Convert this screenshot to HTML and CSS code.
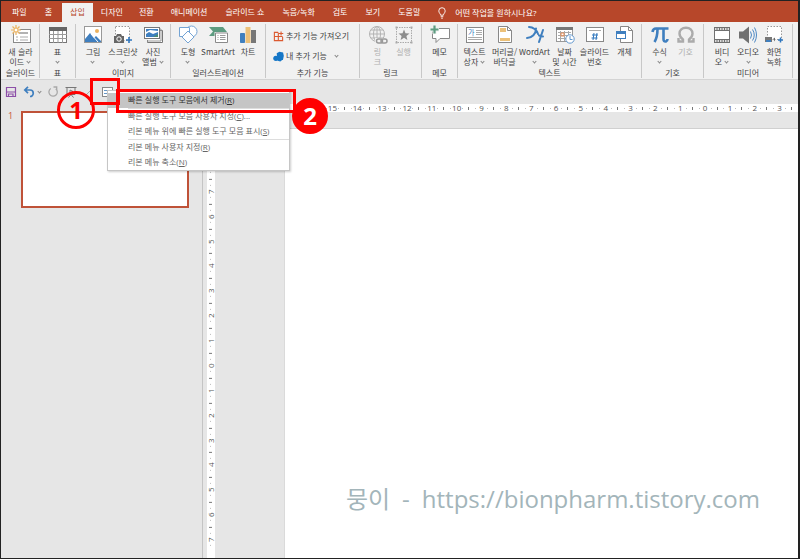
FILE: index.html
```html
<!DOCTYPE html>
<html lang="ko">
<head>
<meta charset="utf-8">
<title>프레젠테이션</title>
<link rel="stylesheet" href="styles.css">
</head>
<body>
<div class="app">
  <nav class="tabs">
    <a class="tab" href="#">파일</a>
    <a class="tab home" href="#">홈</a>
    <a class="tab active" href="#">삽입</a>
    <a class="tab" href="#">디자인</a>
    <a class="tab" href="#">전환</a>
    <a class="tab wide" href="#">애니메이션</a>
    <a class="tab wide" href="#">슬라이드 쇼</a>
    <a class="tab wide" href="#">녹음/녹화</a>
    <a class="tab wide" href="#">검토</a>
    <a class="tab wide" href="#">보기</a>
    <a class="tab wide" href="#">도움말</a>
    <a class="tell" href="#"><svg width="8" height="12" viewBox="0 0 8 12" fill="none" stroke="#fff" stroke-width=".9"><path d="M2.6 8.2C2.6 6.6.8 6 .8 3.9a3.2 3.2 0 0 1 6.4 0C7.200 6 5.400 6.600 5.400 8.200zM2.700 9.700h2.600M3.200 11.200h1.600"/></svg>어떤 작업을 원하시나요?</a>
  </nav>

  <div class="ribbon">
    <section class="group">
      <div class="tools">
        <button class="tool"><svg viewBox="0 0 20 20" fill="none"><rect x="2.500" y="4.500" width="17" height="13" fill="#fff" stroke="#8a8a8a"/><path d="M8 8h9" stroke="#999" stroke-width="1.500"/><path d="M5 12h2m2 0h8M5 15h2m2 0h8" stroke="#aaa"/><circle cx="5" cy="5" r="3.800" fill="#f1f1f1"/><path d="M5 0v10M0 5h10M1.500 1.500l7 7M8.500 1.500l-7 7" stroke="#ecb35f" stroke-width="1.200"/><circle cx="5" cy="5" r="2" fill="#fff" stroke="#ecb35f"/></svg><span>새 슬라<br>이드 <i class="caret"></i></span></button>
      </div>
      <h2>슬라이드</h2>
    </section>
    <section class="group">
      <div class="tools">
        <button class="tool"><svg viewBox="0 0 20 20" fill="none"><rect x="1.500" y="2.500" width="17" height="15" fill="#fff" stroke="#777"/><path d="M1 2h18v4H1z" fill="#666"/><path d="M1 9.500h18M1 13.500h18M5.500 6v12M10 6v12M14.500 6v12" stroke="#999"/></svg><span>표<br><i class="caret"></i></span></button>
      </div>
      <h2>표</h2>
    </section>
    <section class="group">
      <div class="tools">
        <button class="tool"><svg viewBox="0 0 20 20"><rect x="1.500" y="1.500" width="17" height="16" fill="#fff" stroke="#999"/><path d="M2 17v-3l5-6 4 5 2-2 5 5v1z" fill="#3f7fbf"/><path d="M8 9l7 8" stroke="#fff"/><circle cx="14" cy="6" r="2" fill="#ecb35f"/></svg><span>그림<br><i class="caret"></i></span></button>
        <button class="tool"><svg viewBox="0 0 20 20" fill="none"><rect x="2.500" y="1.500" width="14" height="14" fill="#fff" stroke="#999" stroke-dasharray="1.500 1.500"/><path d="M1 11h2l1-2h4l1 2h2v7H1z" fill="#666"/><circle cx="6" cy="14" r="2.200" stroke="#fff"/><path d="M16 12v6m-3-3h6" stroke="#2f76bd" stroke-width="1.600"/></svg><span>스크린샷<br><i class="caret"></i></span></button>
        <button class="tool"><svg viewBox="0 0 20 20" fill="none"><path d="M16 5.500h3.500v12h-15V15" fill="#fff" stroke="#777"/><path d="M17 4h1v12H4" stroke="#999"/><rect x="1.500" y="2.500" width="15" height="11" fill="#fff" stroke="#777"/><path d="M3 12v-3l3-2 4 2 5-2v5z" fill="#3f7fbf"/><path d="M3 4h12v2L7 5 3 7z" fill="#3f7fbf"/><path d="M10 12l5-3v3z" fill="#4c8c72"/></svg><span>사진<br>앨범 <i class="caret"></i></span></button>
      </div>
      <h2>이미지</h2>
    </section>
    <section class="group">
      <div class="tools">
        <button class="tool"><svg viewBox="0 0 20 20" fill="#fff" stroke="#74a4d4"><circle cx="13.500" cy="6.500" r="5.500"/><path d="M1.500 2.500h10v9h-10z"/><path d="M10 6l6 6-6 6-6-6z"/></svg><span>도형<br><i class="caret"></i></span></button>
        <button class="tool"><svg viewBox="0 0 20 20" fill="none"><path d="M1 2h14l4 5-4 4H1l4-4.500z" fill="#5d9b80"/><path d="M6.500 7H20v11.500H6.500z" fill="#f1f1f1"/><path d="M7.500 8h12v9.500h-12z" fill="#fff" stroke="#8a8a8a"/><path d="M9.500 10.500h1m1.500 0h5.500M9.500 12.500h1m1.500 0h5.500M9.500 14.500h1m1.500 0h5.500" stroke="#999"/></svg><span>SmartArt</span></button>
        <button class="tool"><svg viewBox="0 0 20 20"><path d="M2.500 8.500h4v9h-4z" fill="#3f7fbf" stroke="#3f7fbf"/><path d="M7.500 2h5v16h-5z" fill="#ecc078"/><path d="M13 5h5v13h-5z" fill="#777"/></svg><span>차트</span></button>
      </div>
      <h2>일러스트레이션</h2>
    </section>
    <section class="group">
      <div class="rows">
        <button class="row"><svg viewBox="0 0 12 12" fill="none" stroke="#dc5a30" stroke-width="1.200"><path d="M5.500 1.500h-4v9h9V6.500M1.500 6h9M5.800 1.500v9M8.800.5v4.500M6.500 2.800h4.700"/></svg>추가 기능 가져오기</button>
        <button class="row"><svg viewBox="0 0 12 12" fill="#1677c7"><path d="M4 2.500L7 .8l4 .7.8 4L11 9l-3 2.500-3-1z"/><circle cx="3.200" cy="8" r="2.900"/></svg>내 추가 기능 <i class="caret far"></i></button>
      </div>
      <h2>추가 기능</h2>
    </section>
    <section class="group narrow">
      <div class="tools">
        <button class="tool" disabled><svg viewBox="0 0 20 20" fill="none" stroke="#b3b3b3"><circle cx="9" cy="9" r="7.500"/><ellipse cx="9" cy="9" rx="3.500" ry="7.500"/><path d="M9 1.500v15M1.500 9h15M3 5h12M3 13h12"/><path d="M7 13h13v6H7z" fill="#f1f1f1" stroke="none"/><rect x="8.500" y="14" width="6" height="4" rx="2" stroke="#999" stroke-width="1.500"/><rect x="13" y="14" width="6" height="4" rx="2" stroke="#999" stroke-width="1.500"/></svg><span>링<br>크</span></button>
        <button class="tool" disabled><svg viewBox="0 0 20 20"><rect x="2.500" y="2.500" width="15" height="15" fill="none" stroke="#aaa" stroke-dasharray="1.500 1"/><path d="M10 4.500l1.500 3.800 4 .2-3.100 2.500 1 3.900L10 12.700l-3.400 2.200 1-3.900L4.500 8.500l4-.2z" fill="#8d8d8d"/><path d="M1.500 1.500h2v2h-2zM16.500 1.500h2v2h-2zM1.500 16.500h2v2h-2zM16.500 16.500h2v2h-2z" fill="#aaa"/></svg><span>실행</span></button>
      </div>
      <h2>링크</h2>
    </section>
    <section class="group">
      <div class="tools">
        <button class="tool"><svg viewBox="0 0 20 20" fill="none"><path d="M2.500 3.500h17v10H10l-4 4v-4H2.500z" fill="#fff" stroke="#888"/><path d="M4.500 0v9M0 4.500h9" stroke="#f1f1f1" stroke-width="4"/><path d="M4.500.5v8M.5 4.500h8" stroke="#5d9b80" stroke-width="2.200"/></svg><span>메모</span></button>
      </div>
      <h2>메모</h2>
    </section>
    <section class="group">
      <div class="tools">
        <button class="tool"><svg viewBox="0 0 20 20"><rect x="1.500" y="2.500" width="17" height="15" fill="#fff" stroke="#888"/><text x="3" y="10" font-size="7" fill="#2f76bd">가</text><path d="M11 5.500h6M11 7.500h6M11 9.500h6M3 12.500h14M3 14.500h14" stroke="#aaa"/></svg><span>텍스트<br>상자 <i class="caret"></i></span></button>
        <button class="tool"><svg viewBox="0 0 20 20"><path d="M3.500 1.500h9l4 4v12h-13z" fill="#fff" stroke="#888"/><path d="M12.500 1.500v4h4" fill="none" stroke="#888"/><path d="M5 3h6v4H5zM5 13h10v3H5z" fill="#ecc078"/></svg><span>머리글/<br>바닥글</span></button>
        <button class="tool"><svg viewBox="0 0 20 20" fill="none" stroke="#3f7fbf" stroke-width="2" stroke-linecap="round"><path d="M4 2c4 0 8 3 9 7M11 3.500C11 9 7 13 2 13M18 5l-4 12M14 10.500l4 1"/></svg><span>WordArt<br><i class="caret"></i></span></button>
        <button class="tool"><svg viewBox="0 0 20 20" fill="none"><rect x="1.500" y="2.500" width="16" height="14" fill="#fff" stroke="#999"/><path d="M1 2h17v3H1z" fill="#777"/><path d="M3 7.500h13M3 10.500h13M3 13.500h13M5.500 6v10M9.500 6v10M13.500 6v10" stroke="#aaa"/><path d="M6 8h3v3H6z" stroke="#e68b55"/><circle cx="15" cy="14" r="4.200" fill="#fff" stroke="#6499cf"/><path d="M15 11v3.500h2.500" stroke="#6499cf"/></svg><span>날짜<br>및 시간</span></button>
        <button class="tool"><svg viewBox="0 0 20 20" fill="none"><rect x="1.500" y="2.500" width="17" height="14" fill="#fff" stroke="#888"/><path d="M4 5.500h12" stroke="#aaa"/><path d="M9 8l-1 7m4-7l-1 7M7 10h6m-6.500 3h6" stroke="#2f76bd"/></svg><span>슬라이드<br>번호</span></button>
        <button class="tool"><svg viewBox="0 0 20 20" fill="#fff" stroke="#888"><path d="M5.500 1.500h8l4 4v12h-12z"/><path d="M13.500 1.500v4h4" fill="none"/><rect x="1.500" y="6.500" width="9" height="7" stroke="#3f7fbf"/><path d="M1 6h10v3H1z" fill="#3f7fbf" stroke="none"/></svg><span>개체</span></button>
      </div>
      <h2>텍스트</h2>
    </section>
    <section class="group narrow">
      <div class="tools">
        <button class="tool"><svg viewBox="0 0 20 20" fill="none" stroke="#3f7fbf"><path d="M2.500 7Q3 3.500 6 3.500h12.500" stroke-width="2.600"/><path d="M7.500 4q0 8-3 13" stroke-width="2.600"/><path d="M13.500 4v10q0 3 2.500 2.500 1.500-.5 1.500-2.500" stroke-width="2.600"/></svg><span>수식<br><i class="caret"></i></span></button>
        <button class="tool" disabled><svg viewBox="0 0 20 20" fill="none" stroke="#ababab" stroke-width="2.400"><path d="M2.500 13v3.500H7v-2Q3.500 12 3.500 8.500C3.500 5 6 2.700 10 2.700s6.500 2.300 6.500 5.800q0 3.500-3.500 6v2h4.500V13"/></svg><span>기호</span></button>
      </div>
      <h2>기호</h2>
    </section>
    <section class="group narrow">
      <div class="tools">
        <button class="tool"><svg viewBox="0 0 20 20"><rect x="2" y="2" width="16" height="16" fill="#707070"/><path d="M3 6h14v8H3z" fill="#fff"/><path d="M3 4h15M3 16h15" stroke="#fff" stroke-width="1.600" stroke-dasharray="1.500 1"/></svg><span>비디<br>오 <i class="caret"></i></span></button>
        <button class="tool"><svg viewBox="0 0 20 20" fill="none"><path d="M1 6.500h4l6-5v17l-6-5H1z" fill="#707070"/><path d="M12.500 6.500q2 3.500 0 7M14.500 4.500q3.500 5.500 0 11M16.500 2.500q4 7.500 0 15" stroke="#4d88c4"/></svg><span>오디오<br><i class="caret"></i></span></button>
        <button class="tool"><svg viewBox="0 0 20 20" fill="none"><rect x="3.500" y="1.500" width="14" height="13" fill="#fff" stroke="#999" stroke-dasharray="1.500 1.500"/><path d="M1 12h7v5H1z" fill="#777"/><path d="M2 15h5v2H2z" fill="#3f7fbf"/><path d="M9 14l2-1.500v4z" fill="#666"/><path d="M16.500 12.500v5M14 15h5" stroke="#2f76bd" stroke-width="1.500"/></svg><span>화면<br>녹화</span></button>
      </div>
      <h2>미디어</h2>
    </section>
  </div>

  <div class="quick">
    <button class="q" aria-label="저장"><svg viewBox="0 0 12 12" fill="none" stroke="#8d4fa8" stroke-width="1.200"><path d="M1.500 1.500h9v9h-9zM1.500 6h9M3.500 10.500V8h4.500v2.500"/></svg></button>
    <button class="q" aria-label="실행 취소"><svg viewBox="0 0 12 12" fill="none" stroke="#3f7fbf" stroke-width="1.700"><path d="M1.500 4h5.500a3.200 3.200 0 0 1 0 6.500M5 .8L1.800 4 5 7.200"/></svg></button>
    <i class="caret"></i>
    <button class="q" aria-label="다시 실행"><svg viewBox="0 0 12 12" fill="none" stroke="#a8a8a8" stroke-width="1.300"><path d="M3.800 2.500a4.200 4.200 0 1 0 5 .3M6.500 1h3.200v3.300"/></svg></button>
    <button class="q" aria-label="슬라이드 쇼"><svg viewBox="0 0 12 12" fill="none" stroke="#777"><path d="M.5 1.500h11M2 2v6.500h8V2M6 8.500L3.500 11.500M6 8.500l2.500 3M5 4l3 1.500L5 7z"/></svg></button>
    <button class="q" aria-label="선"><svg viewBox="0 0 12 12" stroke="#aaa"><path d="M2 10l8-8"/></svg></button>
    <button class="q" aria-label="텍스트 상자"><svg viewBox="0 0 12 12" fill="#fff" stroke="#888"><rect x="1.500" y="1.500" width="10" height="9"/><path d="M3 4.500h3M3 7.500h8M7.500 4.500H10" stroke="#6898c8"/></svg></button>
  </div>

  <main class="work">
    <aside class="slides">
      <span class="num">1</span>
      <div class="thumb"></div>
    </aside>
    <div class="vside">
      <div class="vruler"><b>9</b><b>8</b><b>7</b><b>6</b><b>5</b><b>4</b><b>3</b><b>2</b><b>1</b><b>0</b><b>1</b><b>2</b><b>3</b><b>4</b><b>5</b><b>6</b><b>7</b></div>
    </div>
    <div class="editor">
      <div class="hruler"><b>15</b><b>14</b><b>13</b><b>12</b><b>11</b><b>10</b><b>9</b><b>8</b><b>7</b><b>6</b><b>5</b><b>4</b><b>3</b><b>2</b><b>1</b><b>0</b><b>1</b><b>2</b><b>3</b></div>
      <div class="canvas"><p class="mark"><span>뭉이</span> <span>-</span> <span>https://bionpharm.tistory.com</span></p></div>
    </div>
  </main>

  <div class="menu">
    <button class="item on">빠른 실행 도구 모음에서 제거(<u>R</u>)</button>
    <hr>
    <button class="item">빠른 실행 도구 모음 사용자 지정(<u>C</u>)...</button>
    <button class="item">리본 메뉴 위에 빠른 실행 도구 모음 표시(<u>S</u>)</button>
    <hr>
    <button class="item">리본 메뉴 사용자 지정(<u>R</u>)</button>
    <button class="item">리본 메뉴 축소(<u>N</u>)</button>
  </div>
  <div class="box box-icon"></div>
  <div class="box box-item"></div>
  <div class="step step-one">1</div>
  <div class="step step-two">2</div>
</div>
</body>
</html>
```
FILE: styles.css
```css
* { box-sizing: border-box; }

body {
  margin: 0;
  font: 8px/10px "Open Sans", "Noto Sans CJK KR", sans-serif;
  color: #444;
}

button {
  margin: 0;
  padding: 0;
  border: 0;
  background: none;
  font: inherit;
  color: inherit;
}

a { color: inherit; text-decoration: none; }

.app {
  position: relative;
  display: flex;
  flex-direction: column;
  min-height: 100vh;
  border: 1px solid #222;
  border-right-width: 2px;
  background: #e6e6e6;
}

/* Tab bar */
.tabs {
  display: flex;
  height: 21px;
  padding: 2px 0 0 3px;
  background: #b7472a;
  color: #fff;
}

.tab {
  padding: 4px 8px 0;
  white-space: nowrap;
}

.tab.home { padding: 4px 10px 0; }
.tab.wide { padding: 4px 9px 0; }
.tab.active { background: #f1f1f1; color: #b7472a; }

.tell {
  display: flex;
  align-items: center;
  gap: 9px;
  margin-left: 9px;
  white-space: nowrap;
}

/* Ribbon */
.ribbon {
  display: grid;
  grid-template-columns: 38fr 36fr 95fr 95fr 94fr 62fr 36fr 184fr 62fr 89fr;
  height: 57px;
  padding: 2px 5px 1px 1px;
  background: #f1f1f1;
}

.group {
  display: flex;
  flex-direction: column;
  justify-content: space-between;
  min-width: 0;
  border-right: 1px solid #c8c8c8;
}

.group h2 {
  margin: 0;
  font: inherit;
  text-align: center;
  white-space: nowrap;
}

.tools {
  display: flex;
  justify-content: center;
  padding-top: 1px;
}

.tool {
  display: flex;
  flex-direction: column;
  align-items: center;
  gap: 2px;
  width: 30px;
  font-family: "Noto Sans CJK KR", sans-serif;
  white-space: nowrap;
}

.narrow .tool { width: 26px; }
.tool svg { flex: none; width: 20px; height: 20px; }
.tool:disabled { color: #b0b0b0; }

.caret {
  display: inline-block;
  width: 3px;
  height: 3px;
  margin: 0 1px 2px;
  border: solid #888;
  border-width: 0 1px 1px 0;
  transform: rotate(45deg);
}

.caret.far { margin-left: 6px; }

.rows {
  display: flex;
  flex-direction: column;
  gap: 8px;
  padding: 6px 0 0 7px;
}

.row {
  display: flex;
  align-items: center;
  gap: 2px;
  height: 12px;
  white-space: nowrap;
}

.row svg { width: 11px; height: 11px; }

/* Quick access bar */
.quick {
  display: flex;
  align-items: center;
  gap: 6px;
  height: 25px;
  padding-left: 4px;
  border-top: 1px solid #d4d4d4;
}

.quick .caret { margin: 0 0 2px -3px; }
.q { width: 12px; height: 12px; }
.q svg { display: block; width: 12px; height: 12px; }

/* Work area */
.work {
  flex: 1;
  display: grid;
  grid-template-columns: 202px 82px 1fr;
}

.slides {
  display: flex;
  align-items: flex-start;
  gap: 8px;
  padding: 7px 13px 0 7px;
  border-right: 1px solid #c4c4c4;
}

.num { width: 5px; font-size: 9px; color: #c8553a; }

.thumb {
  flex: 1;
  aspect-ratio: 168 / 97;
  border: 2px solid #bf5238;
  background: #fff;
}

.vside {
  display: flex;
  padding: 25px 0 0 4px;
  border-right: 1px solid #dadada;
}

.vruler {
  display: flex;
  flex-direction: column;
  width: 8px;
  padding-bottom: 6px;
  background: #fff;
}

.vruler b, .hruler b {
  display: flex;
  align-items: center;
  justify-content: center;
  flex: 1;
  min-width: 0;
  min-height: 0;
  font-weight: 400;
  line-height: 8px;
  color: #555;
  background-repeat: no-repeat;
  background-image: linear-gradient(#777, #777), linear-gradient(#bbb, #bbb), linear-gradient(#bbb, #bbb);
}

.vruler b {
  writing-mode: vertical-rl;
  transform: rotate(180deg);
  background-size: 3px 1px, 1px 1px, 1px 1px;
  background-position: 50% 100%, 50% 25%, 50% 75%;
}

.editor { display: flex; flex-direction: column; }

.hruler {
  display: flex;
  height: 8px;
  padding: 0 6px 0 35px;
  background: #fff;
}

.hruler b {
  background-size: 1px 3px, 1px 1px, 1px 1px;
  background-position: 100% 50%, 25% 50%, 75% 50%;
}

.canvas {
  flex: 1;
  display: flex;
  flex-direction: column;
  justify-content: flex-end;
  margin-top: 16px;
  padding: 0 38px 42px;
  border-top: 1px solid #d0d0d0;
  background: #fff;
}

.mark {
  display: flex;
  justify-content: flex-end;
  gap: 12px;
  margin: 0;
  font-size: 24px;
  line-height: 34px;
  color: #a3b5ba;
}

/* Context menu */
.menu {
  position: absolute;
  top: 89px;
  left: 106px;
  width: 183px;
  padding: 2px 0 0;
  border: 1px solid #c6c6c6;
  background: #fff;
  box-shadow: 1px 1px 2px #0003;
  color: #666;
}

.item {
  display: block;
  width: 100%;
  height: 15px;
  padding: 0 0 1px 20px;
  text-align: left;
  white-space: nowrap;
}

.item.on { background: #c5c5c5; color: #333; }

.menu hr {
  margin: 0 0 0 20px;
  border: 0;
  border-top: 1px solid #ddd;
}

/* Step callouts */
.box {
  position: absolute;
  border: 3px solid #f00;
}

.box-icon { top: 77px; left: 89px; width: 30px; height: 27px; }
.box-item { top: 88px; left: 115px; width: 180px; height: 24px; }

.step {
  position: absolute;
  display: flex;
  align-items: center;
  justify-content: center;
  border: 3px solid #f00;
  border-radius: 50%;
  font-size: 24px;
  font-weight: 700;
  color: #f00;
}

.step-one { top: 90px; left: 56px; width: 38px; height: 38px; }

.step-two {
  top: 97px;
  left: 291px;
  width: 36px;
  height: 36px;
  background: #f00;
  color: #fff;
}
```
